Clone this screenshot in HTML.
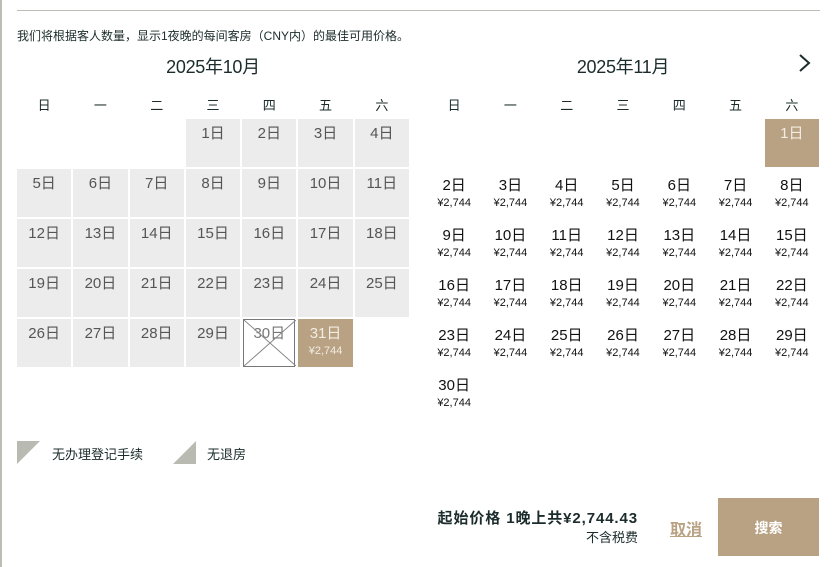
<!DOCTYPE html>
<html><head><meta charset="utf-8"><style>
*{margin:0;padding:0;box-sizing:border-box}
body{width:834px;height:567px;background:#fff;font-family:"Liberation Sans","Noto Sans CJK SC",sans-serif;color:#1c2b2b;position:relative;overflow:hidden}
.lb{position:absolute;left:0;top:0;width:2px;height:567px;background:#bdbdb5}
.hr{position:absolute;left:17px;top:10px;width:803px;height:1px;background:#bdbdb5}
.note{position:absolute;left:17px;top:27px;font-size:12px;color:#1c2b2b}
.title{position:absolute;top:53px;font-size:18px;width:392px;text-align:center;color:#1c2b2b;letter-spacing:-0.3px}
.wd{position:absolute;top:95px;width:392px;display:grid;grid-template-columns:repeat(7,1fr);column-gap:2px;font-size:13px;text-align:center}
.grid{position:absolute;top:119px;width:392px;display:grid;grid-template-columns:repeat(7,1fr);grid-auto-rows:48px;gap:2px}
.g{background:#ececec;color:#555;font-size:15px;text-align:center;padding-top:3px}
.sel{background:#b8a283;color:#f2ece2;font-size:15px;text-align:center;padding-top:3px}
.sel small{display:block;font-size:11px;margin-top:2px}
.x{border:1px solid #777;position:relative;color:#777;font-size:15px;text-align:center;padding-top:2px;margin:0 1px}
.x svg{position:absolute;left:0;top:0}
.d{text-align:center;font-size:15px;color:#111;padding-top:5px}
.d small{display:block;font-size:11px;margin-top:2px}
.arrow{position:absolute;left:797px;top:53px}
.leg{position:absolute;top:444px;font-size:13px;color:#1c2b2b}
.tri{position:absolute;top:441px}
.price{position:absolute;right:196px;top:507px;font-size:15px;font-weight:bold;color:#1c2b2b;text-align:right;letter-spacing:0.9px}
.tax{position:absolute;right:196px;top:527px;font-size:13px;color:#1c2b2b}
.cancel{position:absolute;left:670px;top:516px;font-size:16px;font-weight:bold;color:#b8a283;text-decoration:underline}
.btn{position:absolute;left:718px;top:498px;width:101px;height:58px;background:#b8a283;color:#fff;font-size:14px;font-weight:bold;text-align:center;line-height:60px}
</style></head><body>
<div class="lb"></div><div class="hr"></div>
<div class="note">我们将根据客人数量，显示1夜晚的每间客房（CNY内）的最佳可用价格。</div>
<div class="title" style="left:17px">2025年10月</div>
<div class="title" style="left:427px">2025年11月</div>
<svg class="arrow" width="16" height="20" viewBox="0 0 16 20"><path d="M3 2 L12 10 L3 18" fill="none" stroke="#1c2b2b" stroke-width="2"/></svg>
<div class="wd" style="left:17px"><div>日</div><div>一</div><div>二</div><div>三</div><div>四</div><div>五</div><div>六</div></div>
<div class="wd" style="left:427px"><div>日</div><div>一</div><div>二</div><div>三</div><div>四</div><div>五</div><div>六</div></div>
<div class="grid" style="left:17px">
<div></div><div></div><div></div><div class="g">1日</div><div class="g">2日</div><div class="g">3日</div><div class="g">4日</div>
<div class="g">5日</div><div class="g">6日</div><div class="g">7日</div><div class="g">8日</div><div class="g">9日</div><div class="g">10日</div><div class="g">11日</div>
<div class="g">12日</div><div class="g">13日</div><div class="g">14日</div><div class="g">15日</div><div class="g">16日</div><div class="g">17日</div><div class="g">18日</div>
<div class="g">19日</div><div class="g">20日</div><div class="g">21日</div><div class="g">22日</div><div class="g">23日</div><div class="g">24日</div><div class="g">25日</div>
<div class="g">26日</div><div class="g">27日</div><div class="g">28日</div><div class="g">29日</div><div class="x"><svg width="52" height="46"><path d="M0 0L52 46M52 0L0 46" stroke="#888" stroke-width="1"/></svg>30日</div><div class="sel">31日<small>¥2,744</small></div><div></div>
</div>
<div class="grid" style="left:427px">
<div></div><div></div><div></div><div></div><div></div><div></div><div class="sel">1日</div>
<div class="d">2日<small>¥2,744</small></div><div class="d">3日<small>¥2,744</small></div><div class="d">4日<small>¥2,744</small></div><div class="d">5日<small>¥2,744</small></div><div class="d">6日<small>¥2,744</small></div><div class="d">7日<small>¥2,744</small></div><div class="d">8日<small>¥2,744</small></div>
<div class="d">9日<small>¥2,744</small></div><div class="d">10日<small>¥2,744</small></div><div class="d">11日<small>¥2,744</small></div><div class="d">12日<small>¥2,744</small></div><div class="d">13日<small>¥2,744</small></div><div class="d">14日<small>¥2,744</small></div><div class="d">15日<small>¥2,744</small></div>
<div class="d">16日<small>¥2,744</small></div><div class="d">17日<small>¥2,744</small></div><div class="d">18日<small>¥2,744</small></div><div class="d">19日<small>¥2,744</small></div><div class="d">20日<small>¥2,744</small></div><div class="d">21日<small>¥2,744</small></div><div class="d">22日<small>¥2,744</small></div>
<div class="d">23日<small>¥2,744</small></div><div class="d">24日<small>¥2,744</small></div><div class="d">25日<small>¥2,744</small></div><div class="d">26日<small>¥2,744</small></div><div class="d">27日<small>¥2,744</small></div><div class="d">28日<small>¥2,744</small></div><div class="d">29日<small>¥2,744</small></div>
<div class="d">30日<small>¥2,744</small></div>
</div>
<svg class="tri" style="left:17px" width="23" height="23"><path d="M0 0H23L0 23Z" fill="#b9bab2"/></svg>
<div class="leg" style="left:52px">无办理登记手续</div>
<svg class="tri" style="left:173px" width="23" height="23"><path d="M23 0V23H0Z" fill="#b9bab2"/></svg>
<div class="leg" style="left:207px">无退房</div>
<div class="price">起始价格 1晚上共¥2,744.43</div>
<div class="tax">不含税费</div>
<div class="cancel">取消</div>
<div class="btn">搜索</div>
</body></html>
